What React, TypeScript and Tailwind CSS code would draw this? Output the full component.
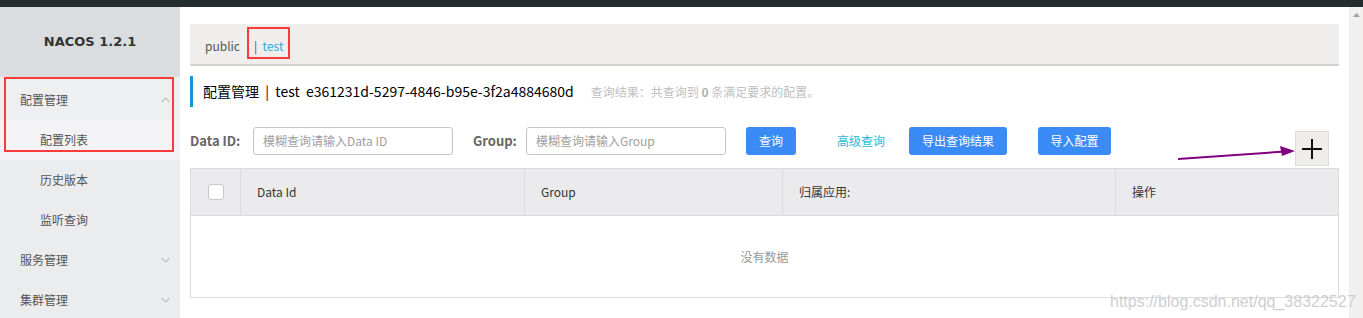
import React from "react";

const font = { fontFamily: '"Noto Sans CJK SC", "Noto Sans", sans-serif' };

function ChevronUp() {
  return (
    <svg width="9" height="6" viewBox="0 0 9 6" className="block">
      <path d="M0.5 5 L4.5 1 L8.5 5" fill="none" stroke="#a0a0a0" strokeWidth="1" />
    </svg>
  );
}
function ChevronDown() {
  return (
    <svg width="9" height="6" viewBox="0 0 9 6" className="block">
      <path d="M0.5 1 L4.5 5 L8.5 1" fill="none" stroke="#a0a0a0" strokeWidth="1" />
    </svg>
  );
}

function MenuRow({ label, sub, bg, chevron }: { label: string; sub?: boolean; bg?: string; chevron?: "up" | "down" }) {
  return (
    <div className={`h-[40px] flex items-center justify-between pr-[10px] ${sub ? "pl-[40px]" : "pl-[20px]"} ${bg ?? ""}`}>
      <span className="text-[12px] text-[#555]">{label}</span>
      {chevron === "up" && <ChevronUp />}
      {chevron === "down" && <ChevronDown />}
    </div>
  );
}

export default function App() {
  return (
    <div className="relative w-[1363px] h-[318px] overflow-hidden bg-white" style={font}>
      <div className="h-[7px] bg-[#252c2e]" />
      <div className="flex h-[311px]">
        {/* Sidebar */}
        <div className="relative w-[180px] bg-[#ebecee] shrink-0">
          <div className="h-[70px] bg-[#dadde0] flex items-center justify-center">
            <span className="text-[13px] font-bold text-[#333]" style={{ fontFamily: '"DejaVu Sans", sans-serif' }}>
              NACOS 1.2.1
            </span>
          </div>
          <div className="pt-[3px] bg-[#eeeff1]" />
          <MenuRow label="配置管理" bg="bg-[#eeeff1]" chevron="up" />
          <MenuRow label="配置列表" sub bg="bg-[#f3f3f5]" />
          <MenuRow label="历史版本" sub />
          <MenuRow label="监听查询" sub />
          <MenuRow label="服务管理" chevron="down" />
          <MenuRow label="集群管理" chevron="down" />
          <div className="absolute left-[4px] top-[70px] w-[170px] h-[75px] border-2 border-[#ff3a3a]" />
        </div>

        {/* Main */}
        <div className="flex-1 px-[10px] pt-[17px]">
          <div className="h-[42px] bg-[#efeeec] border-b-2 border-[#d3d3ce] flex items-center pl-[15px] pt-[3px] text-[12px]">
            <span className="text-[#555]">public</span>
            <span className="relative ml-[14px] text-[#1fb0da] whitespace-pre">
              <span className="text-[#555]">|</span>  test
              <span className="absolute -left-[7px] -top-[10px] w-[43px] h-[32px] border-2 border-[#ff3a3a]" />
            </span>
          </div>

          <div className="mt-[10px] flex items-center h-[31px] border-l-[3px] border-[#1296db] pl-[10px]">
            <span className="text-[14px] text-black whitespace-pre">配置管理  |  test  e361231d-5297-4846-b95e-3f2a4884680d</span>
            <span className="ml-[17px] text-[12px] text-[#c0c0c0]">
              查询结果：共查询到 <b className="text-[#b0b0b0]">0</b> 条满足要求的配置。
            </span>
          </div>

          <div className="mt-[20px] h-[28px] flex items-start">
            <span className="h-[28px] flex items-center text-[13px] font-bold text-[#666] w-[63px]">Data ID:</span>
            <div className="w-[200px] h-[28px] border border-[#c4c6cf] rounded-[3px] flex items-center pl-[9px] text-[12px] text-[#a0a0a0]">
              模糊查询请输入Data ID
            </div>
            <span className="ml-[20px] h-[28px] flex items-center text-[13px] font-bold text-[#666] w-[53px]">Group:</span>
            <div className="w-[200px] h-[28px] border border-[#c4c6cf] rounded-[3px] flex items-center pl-[9px] text-[12px] text-[#a0a0a0]">
              模糊查询请输入Group
            </div>
            <button className="ml-[20px] w-[50px] h-[28px] bg-[#3b8bf6] rounded-[3px] text-white text-[12px]">查询</button>
            <span className="ml-[41px] h-[28px] flex items-center text-[12px] text-[#1fb8d8]">高级查询</span>
            <button className="ml-[24px] w-[98px] h-[28px] bg-[#3b8bf6] rounded-[3px] text-white text-[12px]">导出查询结果</button>
            <button className="ml-[31px] w-[73px] h-[28px] bg-[#3b8bf6] rounded-[3px] text-white text-[12px]">导入配置</button>
            <button className="ml-auto mr-[10px] mt-[4px] w-[34px] h-[35px] bg-[#eeedeb] border border-[#dcdcdc] flex items-center justify-center shrink-0">
              <svg width="20" height="20" viewBox="0 0 20 20">
                <path d="M10 0 V20 M0 10 H20" stroke="#111" strokeWidth="2" />
              </svg>
            </button>
          </div>

          <div className="mt-[13px] border border-[#dcdcdc]">
            <div className="h-[47px] bg-[#ebebed] flex text-[12px] text-[#333] border-b border-[#dcdcdc]">
              <div className="w-[50px] border-r border-[#dcdcdc] flex items-center justify-center">
                <div className="w-[16px] h-[16px] bg-white border border-[#c8c8c8] rounded-[3px]" />
              </div>
              <div className="w-[284px] border-r border-[#dcdcdc] flex items-center pl-[16px]">Data Id</div>
              <div className="w-[258px] border-r border-[#dcdcdc] flex items-center pl-[16px]">Group</div>
              <div className="w-[333px] border-r border-[#dcdcdc] flex items-center pl-[16px]">归属应用:</div>
              <div className="flex-1 flex items-center pl-[16px]">操作</div>
            </div>
            <div className="h-[81px] flex items-center justify-center text-[12px] text-[#999]">没有数据</div>
          </div>
        </div>

        {/* Scrollbar */}
        <div className="w-[14px] bg-[#f1f0ef] shrink-0 flex justify-center pt-[6px]">
          <svg width="7" height="4" viewBox="0 0 7 4" className="block">
            <path d="M0 4 L3.5 0 L7 4 Z" fill="#a3a3a3" />
          </svg>
        </div>
      </div>

      {/* annotation arrow */}
      <svg className="absolute left-[1170px] top-[140px]" width="130" height="30" viewBox="0 0 130 30">
        <path d="M8 19 L115 11.5" stroke="#800080" strokeWidth="2" fill="none" />
        <path d="M125 11 L110 6 L112 16 Z" fill="#800080" />
      </svg>

      <div
        className="absolute left-[1110px] top-[290px] text-[16px] text-[#cfcfcf] whitespace-nowrap"
        style={{ fontFamily: '"Liberation Sans", Arial, sans-serif' }}
      >
        https://blog.csdn.net/qq_38322527
      </div>
    </div>
  );
}
